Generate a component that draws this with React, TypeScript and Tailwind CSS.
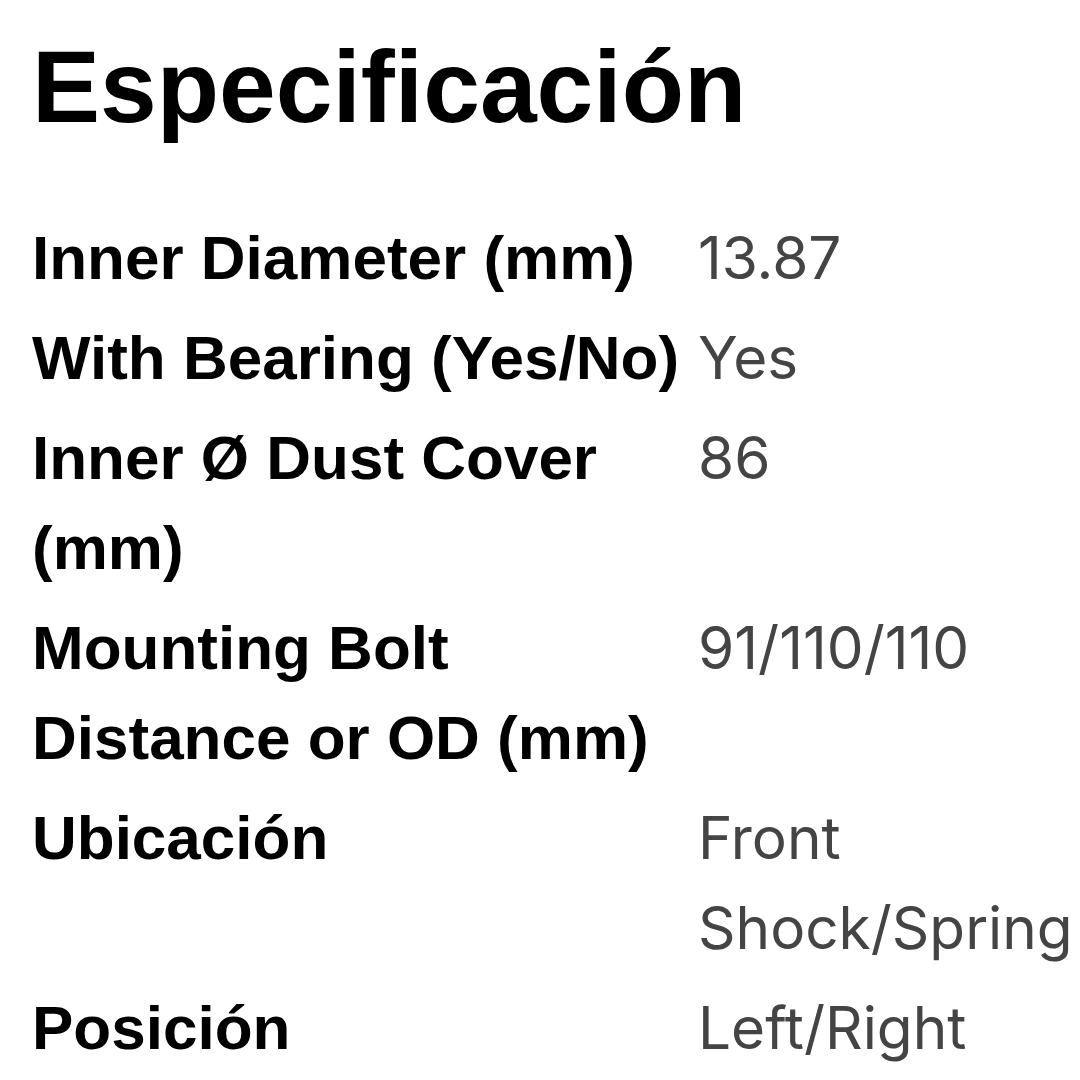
import React from "react";

interface Spec {
  label: string;
  value: string;
}

const specs: Spec[] = [
  { label: "Inner Diameter (mm)", value: "13.87" },
  { label: "With Bearing (Yes/No)", value: "Yes" },
  { label: "Inner Ø Dust Cover (mm)", value: "86" },
  { label: "Mounting Bolt Distance or OD (mm)", value: "91/110/110" },
  { label: "Ubicación", value: "Front Shock/Spring" },
  { label: "Posición", value: "Left/Right" },
];

function App() {
  return (
    <div className="w-[1080px] h-[1080px] bg-white overflow-hidden pl-[32px] pt-[26px]">
      <h1 className="font-['Liberation_Sans',Arial,sans-serif] font-bold text-[102px] leading-[1.2] text-black mb-[60px]">
        Especificación
      </h1>

      <div className="grid grid-cols-[666px_1fr]">
        {specs.map((spec) => (
          <React.Fragment key={spec.label}>
            <div className="py-[5px] font-['Liberation_Sans',Arial,sans-serif] font-bold text-[62px] leading-[90px] text-black">
              {spec.label}
            </div>
            <div className="py-[5px] font-['Inter',sans-serif] text-[58.5px] leading-[90px] text-[#444444]">
              {spec.value}
            </div>
          </React.Fragment>
        ))}
      </div>
    </div>
  );
}

export default App;
